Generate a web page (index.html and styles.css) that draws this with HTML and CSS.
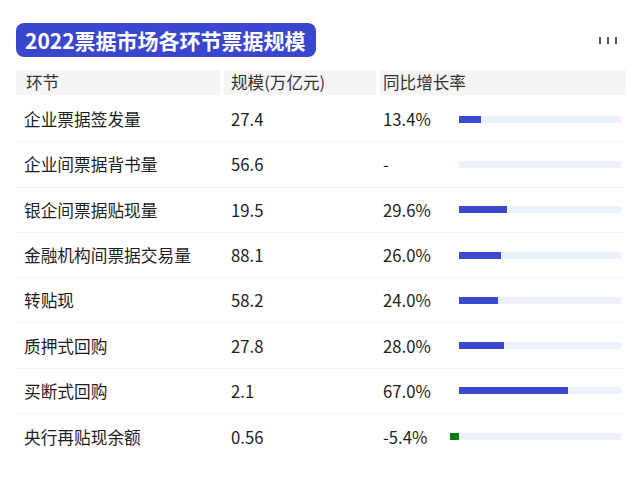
FILE: index.html
```html
<!DOCTYPE html>
<html lang="zh">
<head>
<meta charset="utf-8">
<link rel="stylesheet" href="styles.css">
</head>
<body>
<div class="page">
  <div class="title-row">
    <div class="badge">2022票据市场各环节票据规模</div>
    <svg class="menu" width="20" height="8" viewBox="0 0 20 8"><rect x="0" y="0" width="2" height="7" fill="#555"/><rect x="8" y="0" width="2" height="7" fill="#555"/><rect x="16" y="0" width="2" height="7" fill="#555"/></svg>
  </div>
  <div class="table">
    <div class="head">
      <div class="hc c1">环节</div>
      <div class="hc c2">规模(万亿元)</div>
      <div class="hc c3">同比增长率</div>
    </div>
    <div class="row"><div class="c1">企业票据签发量</div><div class="c2">27.4</div><div class="c3"><span class="pct">13.4%</span><div class="track"><div class="fill" style="width:13.4%"></div></div></div></div>
    <div class="row"><div class="c1">企业间票据背书量</div><div class="c2">56.6</div><div class="c3"><span class="pct">-</span><div class="track"></div></div></div>
    <div class="row"><div class="c1">银企间票据贴现量</div><div class="c2">19.5</div><div class="c3"><span class="pct">29.6%</span><div class="track"><div class="fill" style="width:29.6%"></div></div></div></div>
    <div class="row"><div class="c1">金融机构间票据交易量</div><div class="c2">88.1</div><div class="c3"><span class="pct">26.0%</span><div class="track"><div class="fill" style="width:26%"></div></div></div></div>
    <div class="row"><div class="c1">转贴现</div><div class="c2">58.2</div><div class="c3"><span class="pct">24.0%</span><div class="track"><div class="fill" style="width:24%"></div></div></div></div>
    <div class="row"><div class="c1">质押式回购</div><div class="c2">27.8</div><div class="c3"><span class="pct">28.0%</span><div class="track"><div class="fill" style="width:28%"></div></div></div></div>
    <div class="row"><div class="c1">买断式回购</div><div class="c2">2.1</div><div class="c3"><span class="pct">67.0%</span><div class="track"><div class="fill" style="width:67%"></div></div></div></div>
    <div class="row last"><div class="c1">央行再贴现余额</div><div class="c2">0.56</div><div class="c3"><span class="pct">-5.4%</span><div class="track"><div class="neg" style="width:5.4%"></div></div></div></div>
  </div>
</div>
</body>
</html>
```
FILE: styles.css
```css
* { box-sizing: border-box; }
html, body { margin: 0; padding: 0; background: #fff; }
body {
  font-family: "Noto Sans CJK SC", "Noto Sans", sans-serif;
  color: #222;
}
.page {
  width: 640px;
  padding: 23px 14px 0 16px;
}
.title-row {
  display: flex;
  justify-content: space-between;
  align-items: center;
  padding-right: 7px;
}
.badge {
  height: 34px;
  line-height: 34px;
  padding: 0 10px 0 9px;
  background: #3a47cd;
  color: #fff;
  font-weight: 700;
  font-size: 21px;
  border-radius: 8px;
  white-space: nowrap;
}
.menu { display: block; margin-top: 1px; }
.table {
  margin-top: 13px;
  width: 610px;
}
.head, .row {
  display: grid;
  grid-template-columns: 204px 152px 246px;
  column-gap: 4px;
}
.head { margin-bottom: 2px; }
.hc {
  height: 25px;
  line-height: 25px;
  background: #f5f5f5;
  font-size: 16.6px;
  color: #333;
}
.head .c1 { padding-left: 10px; }
.head .c2 { padding-left: 7px; }
.head .c3 { padding-left: 3px; }
.row {
  height: 45.3px;
  align-items: center;
  border-bottom: 1px solid #f1f1f1;
  font-size: 16.7px;
  color: #1e1e1e;
}
.row.last { border-bottom: none; }
.row .c1 { padding-left: 8px; }
.row .c2 { padding-left: 7px; }
.row .c3 {
  display: flex;
  align-items: center;
  padding-left: 3px;
}
.pct { width: 76px; flex: none; }
.track {
  position: relative;
  width: 162px;
  height: 7px;
  background: #edf1fc;
}
.fill {
  height: 100%;
  background: #3b48cf;
}
.neg {
  position: absolute;
  right: 100%;
  top: 0;
  height: 100%;
  background: #067d06;
}
```
